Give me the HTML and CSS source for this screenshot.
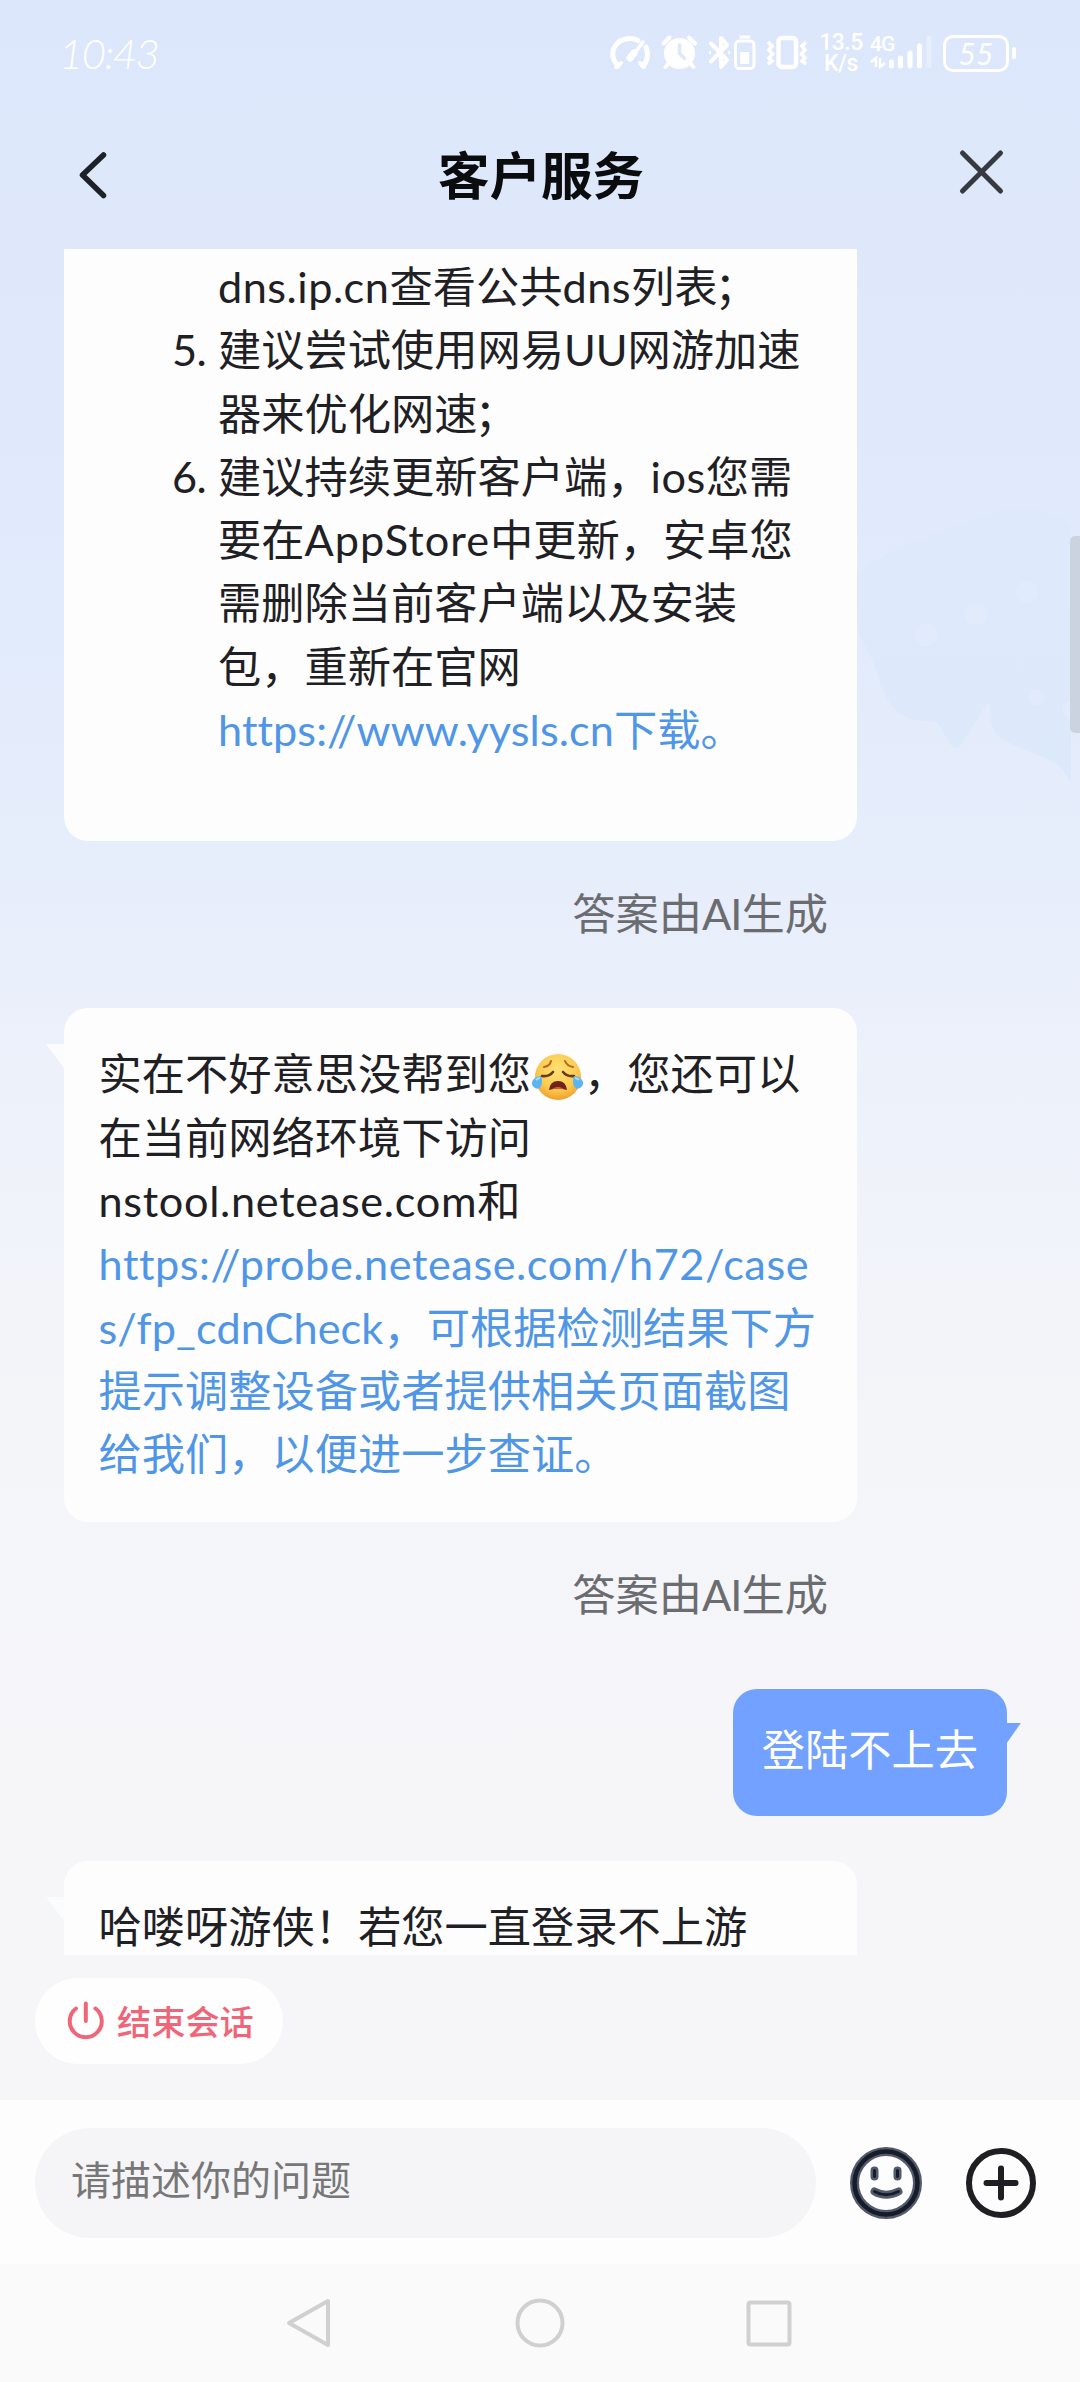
FILE: index.html
```html
<!DOCTYPE html>
<html lang="zh-CN">
<head>
<meta charset="utf-8">
<title>客户服务</title>
<link rel="stylesheet" href="styles.css">
</head>
<body>
<div class="screen">
  <svg class="backdrop" width="224" height="290" viewBox="0 0 224 290">
    <defs>
      <linearGradient id="bubble" x1="0" y1="0" x2="0" y2="1">
        <stop offset="0" stop-color="#dfe9fc"/>
        <stop offset="1" stop-color="#dce9fb"/>
      </linearGradient>
    </defs>
    <path fill="url(#bubble)" d="M0 74 L40 50 L130 16 Q180 0 214 28 V285 L204 270 Q200 265 188 260 L150 244 Q134 236 133 218 L133 206 Q129 205 125 214 L104 247 Q98 254 93 246 L82 227 Q78 222 64 223 Q36 220 26 192 Q12 150 0 132Z"/>
    <g fill="#e1ebfc">
      <circle cx="69" cy="137" r="11"/><circle cx="119" cy="116" r="11"/><circle cx="170" cy="94" r="11"/><circle cx="180" cy="200" r="7.5"/><path d="M214 203q-9 2-9 9 0 6 9 8z"/>
    </g>
  </svg>

  <header class="status">
    <span class="clock">10:43</span>
    <div class="status-icons">
      <svg class="gauge" width="40" height="38" viewBox="609 34 40 38" fill="none" stroke="#fff" stroke-width="5" stroke-linecap="round">
        <path d="M617 66Q609 57 613 48Q618 38 630 38.500Q634 38.500 637 40.500"/><path d="M645 47Q649 58 642 66"/><path d="M615 67l5-4M643 67l-4-4" stroke-width="4"/><path d="M630 58L642 42" stroke-width="3.500"/><path d="M629 58l4-5" stroke-width="7"/>
      </svg>
      <svg class="alarm" width="37" height="38" viewBox="660 34 37 38">
        <circle cx="678.500" cy="53.500" r="15.500" fill="#fff"/><g stroke="#fff" stroke-width="4" stroke-linecap="round" fill="none"><path d="M662.500 43.500l6-6M694 43.500l-6-6M668 63l-3.500 4M689 63l3.500 4"/></g><path d="M678.500 43.500v10l6 6" fill="none" stroke="#dfe8fb" stroke-width="3.500"/>
      </svg>
      <svg class="bluetooth" width="48" height="38" viewBox="707 34 48 38" fill="none" stroke="#fff">
        <path d="M710 43.500L726 60L720 67V38L726 45L710 61.500" stroke-width="4" stroke-linecap="round" stroke-linejoin="round"/><path d="M708 52.500h2M727 52.500h2" stroke-width="3"/><rect x="734.500" y="41" width="18.500" height="27.500" rx="4" stroke-width="3"/><path d="M738.500 37h10.500" stroke-width="3"/><path d="M743.700 52v12" stroke-width="9"/>
      </svg>
      <svg class="vibrate" width="42" height="38" viewBox="765 34 42 38" fill="none" stroke="#fff">
        <rect x="777.500" y="38" width="17.500" height="29" rx="3.500" stroke-width="4.500"/><path d="M767 42l4 4-3 4 3.500 4-3.500 4 3 3-4 3M805 42l-4 4 3 4-3.500 4 3.500 4-3 3 4 3" stroke-width="3.500"/>
      </svg>
      <div class="speed"><span>13.5</span><span>K/s</span></div>
      <div class="mobile">
        <span class="net">4G</span>
        <svg width="62" height="38" viewBox="869 34 62 38" stroke="#fff" fill="none">
          <path d="M870 62l5-4v9M879 58v9l5-4" stroke-width="2.500"/><g stroke-width="5" stroke-linecap="round"><path d="M890.500 62v4M899.500 58v8M909 53v13M918.500 46v20"/><path d="M928 38v28" stroke-opacity=".3"/></g>
        </svg>
      </div>
      <div class="battery"><span>55</span></div>
      <i class="cap"></i>
    </div>
  </header>

  <nav class="titlebar">
    <svg width="40" height="56" viewBox="0 0 40 56" fill="none" stroke="#1d2228" stroke-width="5.500" stroke-linecap="round" stroke-linejoin="round"><path d="M31.500 8L10.500 28L31.500 48.500"/></svg>
    <h1>客户服务</h1>
    <svg width="56" height="56" viewBox="0 0 56 56" fill="none" stroke="#363a40" stroke-width="5" stroke-linecap="round"><path d="M9.500 6l38 38M47.500 6l-38 38"/></svg>
  </nav>

  <main class="chat">
    <section class="card card-first">
      <ol class="steps">
        <li><span class="l">dns.ip.cn</span>查看公共<span class="l">dns</span>列表<span class="semi">；</span></li>
        <li><b>5.</b>建议尝试使用网易UU网游加速<br>器来优化网速<span class="semi">；</span></li>
        <li><b>6.</b>建议持续更新客户端，<span class="l">ios</span>您需<br>要在<span class="l wide">AppStore</span>中更新，安卓您<br>需删除当前客户端以及安装<br>包，重新在官网<br><a><span class="l tight">https://www.yysls.cn</span>下载。</a></li>
      </ol>
    </section>
    <p class="note">答案由<span class="ai">AI</span>生成</p>

    <section class="card tail-left">
      <p>实在不好意思没帮到您<svg class="emoji" width="53" height="50" viewBox="0 0 53 50">
        <defs><radialGradient id="face" cx=".5" cy=".35" r=".65"><stop offset="0" stop-color="#ffe274"/><stop offset=".65" stop-color="#fccb50"/><stop offset="1" stop-color="#efa02d"/></radialGradient></defs>
        <circle cx="27" cy="25" r="23" fill="url(#face)"/>
        <g fill="none" stroke="#b0672a" stroke-width="2" stroke-linecap="round"><path d="M13 15q6-1 7-6M34 9q2 5 8 6"/></g>
        <g fill="none" stroke="#6b3918" stroke-width="2.600" stroke-linecap="round"><path d="M11 24q7 1 11-4M32 20q4 5 11 4"/></g>
        <path d="M18 38q1-9 9-9t9 9q-9-3-18 0z" fill="#6e2518"/><path d="M21 37q6-4 12 0-6-1-12 0z" fill="#e65b50"/>
        <path d="M10 24q2 6 0 10-2 4-6 2-5-3-2-8 3-4 8-4zM43 24q-2 6 0 10 2 4 6 2 5-3 2-8-3-4-8-4z" fill="#5ab5f2"/><path d="M5 28q2-2 4-2M48 28q-2-2-4-2" stroke="#a6dafb" stroke-width="2" fill="none"/>
      </svg>，您还可以<br>在当前网络环境下访问<br><span class="l mid">nstool.netease.com</span>和<br><a><span class="l probe">https://probe.netease.com/h72/case</span><br><span class="l check">s/fp_cdnCheck</span>，可根据检测结果下方<br>提示调整设备或者提供相关页面截图<br>给我们，以便进一步查证。</a></p>
    </section>
    <p class="note">答案由<span class="ai">AI</span>生成</p>

    <section class="mine">登陆不上去</section>

    <section class="card card-last tail-left">
      <p>哈喽呀游侠！若您一直登录不上游</p>
    </section>
  </main>

  <div class="actions">
    <button class="end">
      <svg width="40" height="42" viewBox="0 0 40 42" fill="none" stroke="#ee6678" stroke-width="4" stroke-linecap="round"><path d="M10 8.500A16 16 0 1 0 29.500 8.500M19.800 3.500V21"/></svg>
      <span>结束会话</span>
    </button>
  </div>

  <footer class="composer">
    <div class="field">请描述你的问题</div>
    <svg class="smile" width="74" height="74" viewBox="0 0 74 74" fill="none" stroke-linecap="round">
      <g stroke="#535b6b"><circle cx="37" cy="37" r="31.500" stroke-width="9"/><path d="M25.500 24.500v6M48.500 24.500v6M25.500 45.500q11.500 6.500 24 0" stroke-width="8"/></g>
      <g stroke="#171c2b"><circle cx="37" cy="37" r="31.500" stroke-width="4.500"/><path d="M25.500 24.500v6M48.500 24.500v6M25.500 45.500q11.500 6.500 24 0" stroke-width="3"/></g>
    </svg>
    <svg class="plus" width="74" height="74" viewBox="0 0 74 74" fill="none" stroke="#1f1f23" stroke-width="6" stroke-linecap="round"><circle cx="37" cy="37" r="32"/><path d="M37 22.500v29M22.500 37h29"/></svg>
  </footer>

  <div class="navbar">
    <svg width="60" height="60" viewBox="0 0 60 60"><path d="M47 8v44L8 30z"/></svg>
    <svg width="60" height="60" viewBox="0 0 60 60"><circle cx="30" cy="30" r="22.500"/></svg>
    <svg width="60" height="60" viewBox="0 0 60 60"><rect x="9.500" y="9.500" width="41" height="42" rx="2"/></svg>
  </div>
  <i class="scroll"></i>
</div>
</body>
</html>
```
FILE: styles.css
```css
* { box-sizing: border-box; }
body { margin: 0; font-family: "Lato", "Noto Sans CJK SC", sans-serif; color: #1f2024; }
p, h1, ol { margin: 0; padding: 0; font-weight: 400; }
svg { display: block; flex: none; }

.screen {
  position: relative;
  display: flex;
  flex-direction: column;
  width: 1080px;
  height: 2382px;
  overflow: hidden;
  background: linear-gradient(180deg, #dce7fb 0, #dfe8fb 240px, #e2ebfc 620px, #e6edfb 850px, #eef2fa 1120px, #f4f5f9 1420px, #f6f6f9 1800px);
}
.backdrop { position: absolute; left: 857px; top: 498px; }
.scroll { position: absolute; right: 0; top: 536px; width: 10px; height: 197px; border-radius: 5px 0 0 5px; background: #cbd3e0; }

.status { position: relative; display: flex; align-items: center; height: 106px; padding-left: 59px; color: #fff; }
.clock { width: 551px; font-size: 42px; font-style: italic; font-weight: 300; letter-spacing: -1.600px; line-height: 38px; }
.status-icons { display: flex; align-items: center; height: 38px; }
.alarm { margin-left: 11px; }
.bluetooth { margin-left: 10px; }
.vibrate { margin-left: 10px; }
.speed { display: flex; flex-direction: column; align-items: center; width: 46px; margin-left: 10px; font: 500 23px/21px Roboto, sans-serif; letter-spacing: -.500px; }
.mobile { position: relative; margin-left: 6px; width: 62px; }
.net { position: absolute; left: 0; top: -1px; font: 500 21px/22px Roboto, sans-serif; letter-spacing: -1px; }
.battery { display: flex; align-items: center; justify-content: center; width: 66px; height: 37px; margin-left: 11px; border: 3px solid #fff; border-radius: 10px; font-size: 30px; font-style: italic; line-height: 30px; }
.cap { width: 4px; height: 12px; margin-left: 3px; border-radius: 2px; background: #fff; }

.titlebar { position: relative; display: flex; align-items: center; justify-content: space-between; height: 143px; padding: 0 71px 6px 72px; }
.titlebar h1 { font-size: 51.500px; line-height: 70px; font-weight: 700; color: #0b0c0e; padding-left: 17px; }

.chat { position: relative; display: flex; flex-direction: column; height: 1706px; overflow: hidden; padding-left: 64px; font-size: 43.250px; line-height: 63.300px; }
.card { position: relative; width: 793px; padding: 34.500px 0 36.500px 34.500px; border-radius: 24px; background: #fdfdfe; white-space: nowrap; flex: none; }
.card-first { padding: 6px 0 80px 154px; border-radius: 0 0 24px 24px; }
.card-last { margin-top: 45px; }
.tail-left::before { content: ""; position: absolute; left: -18px; top: 36px; width: 18px; height: 24px; background: #fbfcfe; clip-path: polygon(0 0, 100% 0, 100% 100%); }
.steps { list-style: none; }
.steps li { position: relative; }
.steps b { position: absolute; left: -46px; font-weight: 400; letter-spacing: -.500px; }
.card a { color: #5096e6; }
.l { letter-spacing: .5px; }
.wide { letter-spacing: 1.050px; }
.tight { letter-spacing: .070px; }
.mid { letter-spacing: .680px; }
.probe { letter-spacing: .560px; }
.check { letter-spacing: .080px; }
.semi { margin-left: -3px; }
.ai { letter-spacing: -1px; }
.emoji { display: inline-block; vertical-align: -1.500px; margin: -10px 0; }
.note { width: 764px; height: 166.600px; padding-top: 41px; text-align: right; color: #6b6c70; flex: none; }

.mine { position: relative; align-self: flex-end; width: 274px; height: 127px; margin-right: 73px; padding-top: 29px; border-radius: 24px; background: #73a1ff; color: #fff; text-align: center; flex: none; }
.mine::after { content: ""; position: absolute; left: 100%; top: 34px; width: 14px; height: 20px; background: #73a1ff; clip-path: polygon(0 0, 100% 0, 0 100%); }

.actions { position: relative; height: 145px; padding: 23px 0 0 35px; background: #f6f6f9; }
.end { display: flex; align-items: center; gap: 11px; width: 248px; height: 86px; padding: 0 0 0 31px; border: 0; border-radius: 43px; background: #fefefe; color: #ee6678; font: 500 34.200px/50px "Noto Sans CJK SC", sans-serif; white-space: nowrap; }
.end span { padding-bottom: 3px; }

.composer { display: flex; align-items: center; height: 164px; padding: 2px 0 0 35px; background: #fdfdfe; }
.field { width: 781px; height: 110px; padding: 0 0 4px 36px; border-radius: 55px; background: #f5f5f8; color: #777; font-size: 40px; line-height: 104px; }
.smile { margin-left: 33px; }
.plus { margin-left: 41px; }

.navbar { display: flex; flex: 1; align-items: center; justify-content: center; gap: 169px; background: #fafafa; }
.navbar svg { fill: none; stroke: #d0d0d0; stroke-width: 4; stroke-linejoin: round; }
```
